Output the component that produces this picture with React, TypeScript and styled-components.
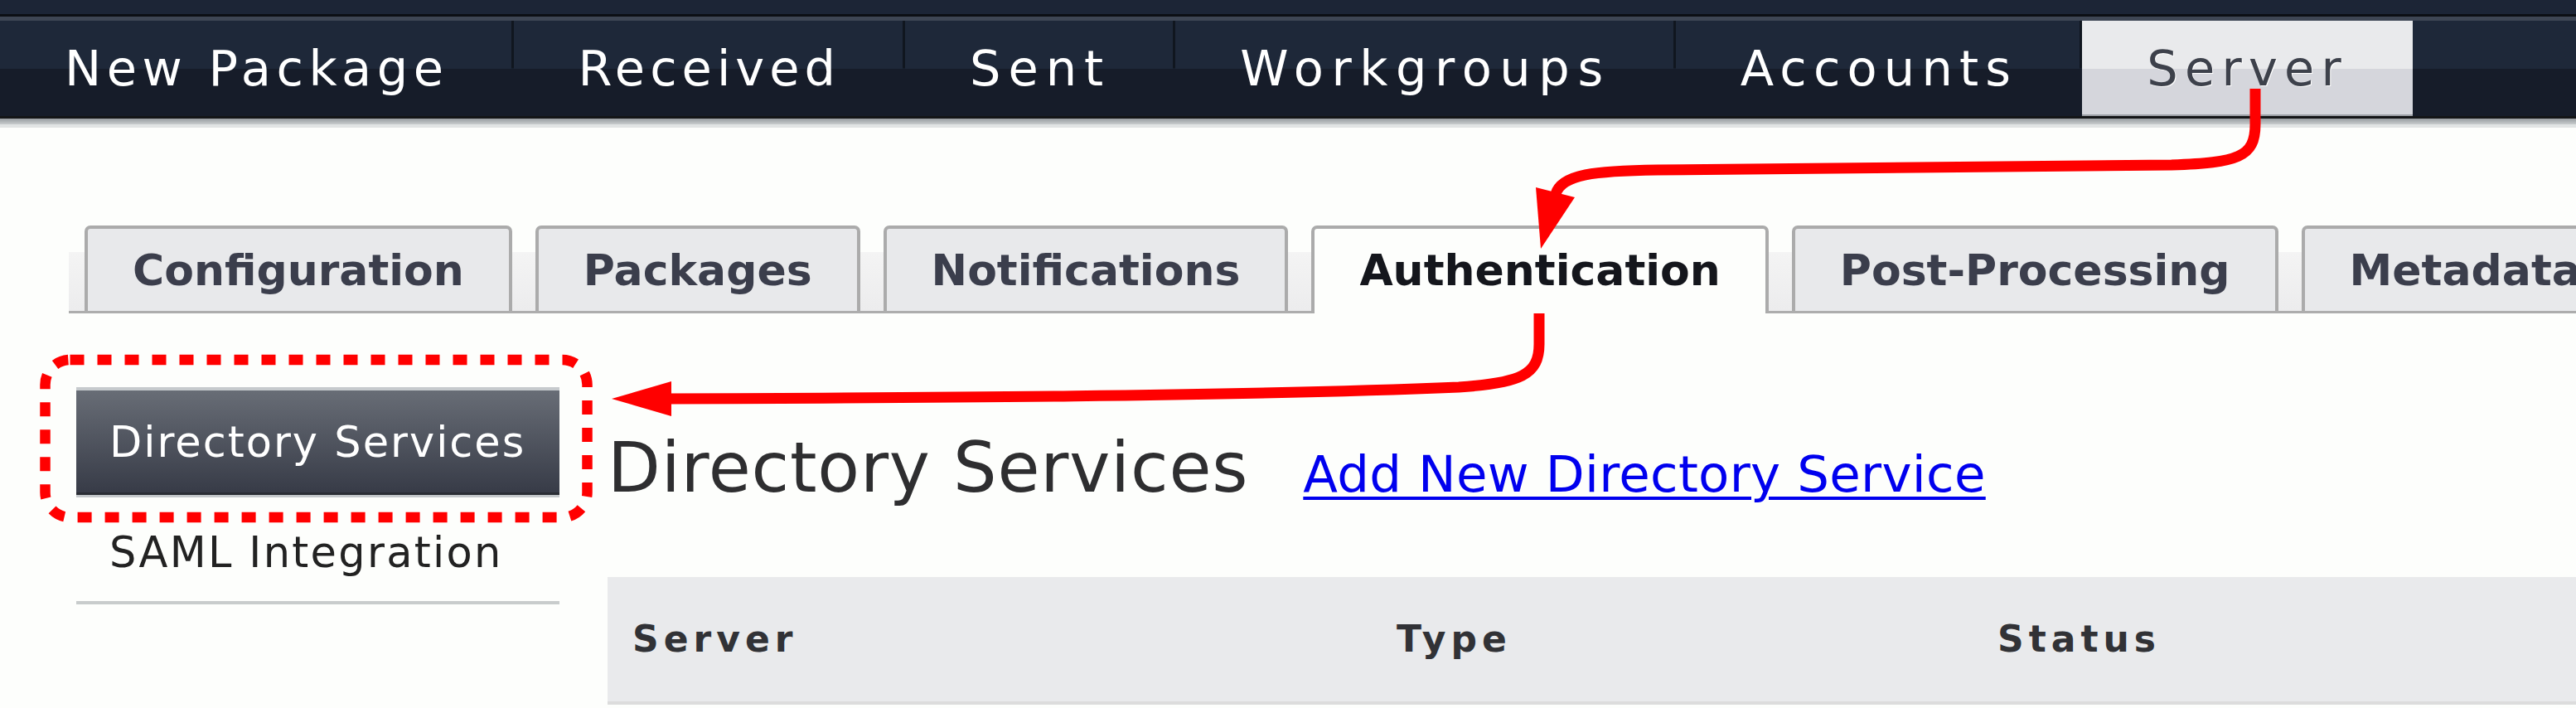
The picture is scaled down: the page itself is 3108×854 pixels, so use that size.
import styled, { createGlobalStyle } from "styled-components";

const Global = createGlobalStyle`
  html, body {
    margin: 0;
    padding: 0;
    width: 3108px;
    height: 854px;
    overflow: hidden;
    background: #fdfefc;
    font-family: "DejaVu Sans", "Liberation Sans", sans-serif;
  }
`;

const NAV_ITEMS = [
  { label: "New Package", track: 6.5 },
  { label: "Received", track: 6 },
  { label: "Sent", track: 9 },
  { label: "Workgroups", track: 9.6 },
  { label: "Accounts", track: 8.2 },
  { label: "Server", track: 8.2, active: true },
];

const TABS = [
  { label: "Configuration" },
  { label: "Packages" },
  { label: "Notifications" },
  { label: "Authentication", active: true },
  { label: "Post-Processing" },
  { label: "Metadata" },
];

const COLUMNS = ["Server", "Type", "Status"];

const Page = styled.div`
  position: relative;
  width: 3108px;
  height: 854px;
  overflow: hidden;
`;

const Masthead = styled.div`
  height: 25px;
  background: linear-gradient(
    to bottom,
    #1c2536 0 17px,
    #0c0f14 17px 20px,
    #3e4654 20px 25px
  );
`;

const NavBar = styled.nav`
  display: flex;
  height: 115px;
  background: linear-gradient(to bottom, #1e2839 0 58px, #161c29 58px);
`;

const NavItem = styled.div<{ $active?: boolean; $track: number }>`
  flex-shrink: 0;
  padding: 0 78px;
  height: 115px;
  line-height: 115px;
  font-size: 59px;
  letter-spacing: ${({ $track }) => $track}px;
  white-space: nowrap;
  color: #ffffff;
  background: linear-gradient(#10161f, #10161f) right top / 3px 50% no-repeat;

  ${({ $active }) =>
    $active &&
    `
    color: #3d414b;
    text-shadow: 1px 1px 0 #ffffff;
    background: linear-gradient(to bottom, #e9eaec 50%, #d5d6dc 50%);
    box-shadow: inset 0 -2px 0 #9b9ea4;
  `}
`;

const NavFoot = styled.div`
  height: 15px;
  background: linear-gradient(
    to bottom,
    #141517 0 3px,
    #989da1 3px,
    #c8cccd 10px,
    #e1e4e4 10px 14px,
    #fdfefc 14px
  );
`;

const Content = styled.div`
  padding: 117px 0 0 83px;
`;

const TabStrip = styled.div`
  display: flex;
  align-items: flex-end;
  gap: 28px;
  height: 103px;
  padding-left: 19px;
  border-bottom: 3px solid #adadad;
  background: linear-gradient(to bottom, transparent 0 32px, #f4f4f4 32px, #ececed 100%);
`;

const Tab = styled.div<{ $active?: boolean }>`
  flex-shrink: 0;
  box-sizing: border-box;
  height: 103px;
  padding: 2px 54px 0;
  border: 4px solid #ababab;
  border-bottom: none;
  border-radius: 7px 7px 0 0;
  background: #e8e9eb;
  color: #3b3e4c;
  font-size: 52px;
  font-weight: bold;
  line-height: 97px;
  white-space: nowrap;

  ${({ $active }) =>
    $active &&
    `
    height: 106px;
    margin-bottom: -3px;
    background: #fdfefc;
    color: #14161c;
  `}
`;

const Body = styled.div`
  display: flex;
  gap: 58px;
  padding-top: 89px;
`;

const Sidebar = styled.div`
  flex-shrink: 0;
  width: 583px;
  margin-left: 9px;
`;

const SideItem = styled.div<{ $active?: boolean }>`
  box-sizing: border-box;
  height: 129px;
  padding: 4px 0 0 40px;
  line-height: 125px;
  font-size: 51px;
  letter-spacing: 2.3px;
  color: #222222;
  white-space: nowrap;
  border-bottom: 4px solid #c8cccc;

  ${({ $active }) =>
    $active &&
    `
    height: 133px;
    padding-top: 0;
    line-height: 126px;
    letter-spacing: 2px;
    color: #ffffff;
    border-top: 4px solid #c6cacd;
    border-bottom: 3px solid #c5c9cc;
    background: linear-gradient(to bottom, #686d76, #363a46);
    box-shadow: inset 0 -3px 0 #2a2d34;
  `}
`;

const Main = styled.div`
  flex: 1;
  min-width: 0;
  padding-top: 56px;
`;

const TitleRow = styled.div`
  display: flex;
  align-items: baseline;
  gap: 66px;
  white-space: nowrap;
`;

const Title = styled.h1`
  margin: 0;
  font-size: 83px;
  font-weight: normal;
  line-height: 83px;
  letter-spacing: 0.8px;
  color: #2e2e30;
`;

const AddLink = styled.a`
  font-size: 61px;
  line-height: 61px;
  letter-spacing: 0.3px;
  color: #0000ee;
  text-decoration: underline;
  text-decoration-thickness: 4px;
  text-underline-offset: 6px;
`;

const HeaderRow = styled.div`
  display: grid;
  grid-template-columns: 922px 725px 1fr;
  margin-top: 90px;
  height: 150px;
  background: #e9eaec;
  border-bottom: 4px solid #dcdcdc;
`;

const HeaderCell = styled.div`
  padding-left: 30px;
  line-height: 150px;
  font-size: 44px;
  font-weight: bold;
  letter-spacing: 6px;
  color: #313236;
`;

const Annotations = styled.svg`
  position: absolute;
  top: 0;
  left: 0;
  pointer-events: none;
`;

export default function App() {
  return (
    <>
      <Global />
      <Page>
        <Masthead />
        <NavBar>
          {NAV_ITEMS.map((item) => (
            <NavItem key={item.label} $active={item.active} $track={item.track}>
              {item.label}
            </NavItem>
          ))}
        </NavBar>
        <NavFoot />

        <Content>
          <TabStrip>
            {TABS.map((tab) => (
              <Tab key={tab.label} $active={tab.active}>
                {tab.label}
              </Tab>
            ))}
          </TabStrip>

          <Body>
            <Sidebar>
              <SideItem $active>Directory Services</SideItem>
              <SideItem>SAML Integration</SideItem>
            </Sidebar>

            <Main>
              <TitleRow>
                <Title>Directory Services</Title>
                <AddLink href="#">Add New Directory Service</AddLink>
              </TitleRow>
              <HeaderRow>
                {COLUMNS.map((col) => (
                  <HeaderCell key={col}>{col}</HeaderCell>
                ))}
              </HeaderRow>
            </Main>
          </Body>
        </Content>

        {/* red callouts drawn over the screenshot */}
        <Annotations width="3108" height="854" viewBox="0 0 3108 854">
          <g fill="none" stroke="#ff0000" strokeWidth="13" strokeLinecap="butt">
            <path d="M2721,107 L2721,150 C2721,190 2700,196 2620,199 L2000,205 C1925,206 1884,210 1877,234" />
            <path d="M1857,378 L1857,415 C1857,452 1835,462 1760,467 C1500,478 1100,480 805,481" />
          </g>
          <g fill="#ff0000">
            <polygon points="1853,226 1900,238 1859,300" />
            <polygon points="738,481 810,460 810,502" />
          </g>
          <rect
            x="54.5"
            y="434"
            width="654"
            height="190"
            rx="30"
            fill="none"
            stroke="#ff0000"
            strokeWidth="12.5"
            strokeDasharray="17 16"
          />
        </Annotations>
      </Page>
    </>
  );
}
